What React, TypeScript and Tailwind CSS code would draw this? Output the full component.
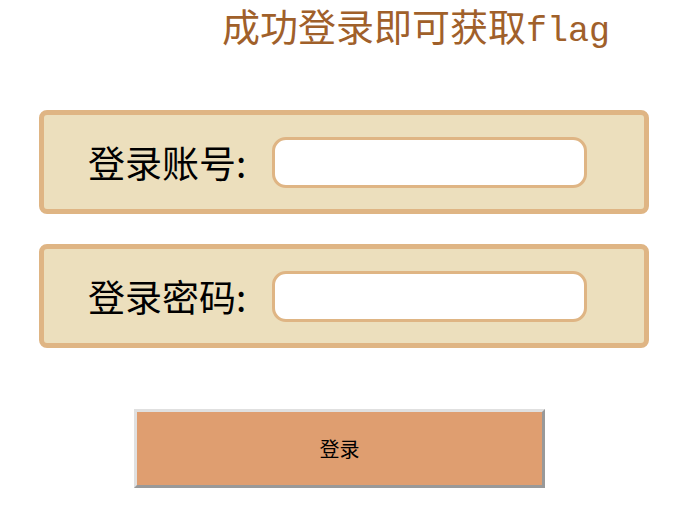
import React from "react";

export default function App() {
  return (
    <div className="w-[697px] h-[513px] bg-white relative overflow-hidden">
      <div className="pl-[222px] pt-[8px] h-[110px]">
        <h1
          className="text-[38px] leading-[46px] text-[#a0602a] whitespace-nowrap"
          style={{ fontFamily: '"Liberation Mono","Noto Sans CJK SC",serif' }}
        >
          成功登录即可获取<span className="text-[35px]">flag</span>
        </h1>
      </div>
      <div
        className="flex flex-col pl-[39px]"
        style={{ fontFamily: '"Noto Sans CJK SC",sans-serif' }}
      >
        <div className="w-[610px] h-[104px] border-[5px] border-[#dfb584] bg-[#ecdfbd] rounded-[8px] flex items-center">
          <span className="ml-[44px] text-[37px] leading-none text-black">登录账号:</span>
          <input className="ml-[26px] w-[315px] h-[51px] bg-white border-[3px] border-[#dfb584] rounded-[14px] outline-none" />
        </div>
        <div className="mt-[30px] w-[610px] h-[104px] border-[5px] border-[#dfb584] bg-[#ecdfbd] rounded-[8px] flex items-center">
          <span className="ml-[44px] text-[37px] leading-none text-black">登录密码:</span>
          <input
            type="password"
            className="ml-[26px] w-[315px] h-[51px] bg-white border-[3px] border-[#dfb584] rounded-[14px] outline-none"
          />
        </div>
        <button className="mt-[61px] ml-[95px] w-[411px] h-[79px] bg-[#df9e70] border-[3px] border-t-[#e0e0e0] border-l-[#e0e0e0] border-r-[#999999] border-b-[#999999] text-[20px] text-black flex items-center justify-center">
          登录
        </button>
      </div>
    </div>
  );
}
